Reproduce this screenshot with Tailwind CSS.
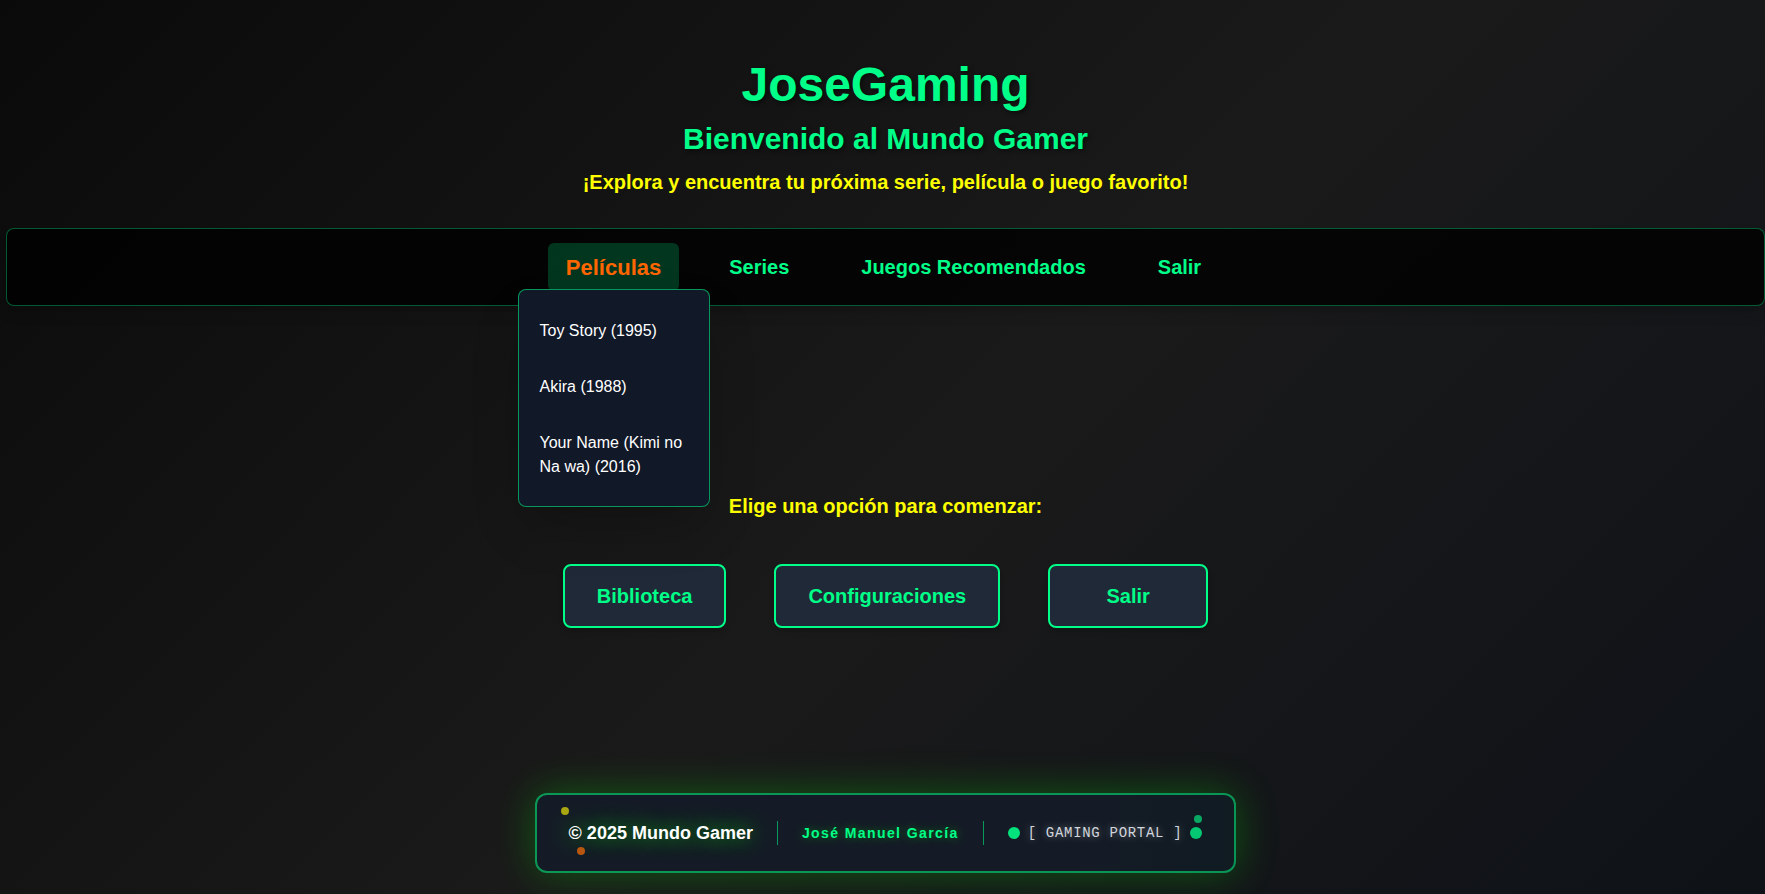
<!DOCTYPE html>
<html lang="es">
<head>
<meta charset="utf-8">
<title>JoseGaming</title>
<script src="https://cdn.jsdelivr.net/npm/@tailwindcss/browser@4"></script>
</head>
<body class="flex min-h-screen flex-col bg-[linear-gradient(135deg,#0a0a0a_0%,#1a1a1a_53%,#0d1117_106%)] pt-[61px] pb-[21px] pl-1.5 font-['Liberation_Sans',Arial,sans-serif] text-white">
  <header class="flex flex-col items-center text-center font-bold">
    <h1 class="mb-3 text-5xl leading-none text-[#00ff88] [text-shadow:2px_2px_4px_rgba(0,0,0,0.5)]">JoseGaming</h1>
    <h2 class="mb-[11px] text-3xl text-[#00ff88] [text-shadow:2px_2px_4px_rgba(0,0,0,0.5)]">Bienvenido al Mundo Gamer</h2>
    <p class="text-xl text-[#ffff00]">¡Explora y encuentra tu próxima serie, película o juego favorito!</p>
  </header>

  <nav class="mt-8 rounded-lg border border-[#00ff88]/35 bg-black/80 p-4 shadow-lg">
    <ul class="flex justify-center gap-10 text-xl font-bold text-[#00ff88]">
      <li class="relative flex h-11 items-center">
        <a href="#peliculas" class="-mx-1.5 flex h-12 shrink-0 items-center rounded-md bg-[#00ff88]/20 px-[18px] pt-0.5 text-[22px] text-[#ff6600]">Películas</a>
        <ul class="absolute top-full left-1/2 z-10 w-48 -translate-x-1/2 rounded-lg border border-[#00ff88]/55 bg-[#111827] pt-[13px] pb-[11px] text-base font-normal text-white shadow-2xl">
          <li><a href="#toy-story" class="block px-[21px] py-4">Toy Story (1995)</a></li>
          <li><a href="#akira" class="block px-[21px] py-4">Akira (1988)</a></li>
          <li><a href="#your-name" class="block px-[21px] py-4">Your Name (Kimi no Na wa) (2016)</a></li>
        </ul>
      </li>
      <li><a href="#series" class="block px-4 py-2">Series</a></li>
      <li><a href="#juegos" class="block px-4 py-2">Juegos Recomendados</a></li>
      <li><a href="#salir" class="block px-4 py-2">Salir</a></li>
    </ul>
  </nav>

  <main class="flex grow flex-col items-center justify-center gap-11 pt-[21px]">
    <p class="text-xl font-bold text-[#ffff00]">Elige una opción para comenzar:</p>
    <div class="flex gap-12 text-xl font-bold text-[#00ff88]">
      <button type="button" class="min-w-40 rounded-lg border-2 border-[#00ff88] bg-[#1f2937] px-8 py-4 shadow-md">Biblioteca</button>
      <button type="button" class="min-w-40 rounded-lg border-2 border-[#00ff88] bg-[#1f2937] px-8 py-4 shadow-md">Configuraciones</button>
      <button type="button" class="min-w-40 rounded-lg border-2 border-[#00ff88] bg-[#1f2937] px-8 py-4 shadow-md">Salir</button>
    </div>
  </main>

  <footer class="flex justify-center">
    <div class="relative flex h-20 items-center gap-6 rounded-xl border-2 border-[#00ff88]/55 bg-[linear-gradient(90deg,#151b26,#141b26_80%,#101b22)] bg-clip-padding px-8 shadow-[0_0_40px_rgba(0,255,0,0.28)]">
      <span class="absolute top-3 left-6 size-2 rounded-full bg-[#aaa612]"></span>
      <span class="absolute bottom-4 left-10 size-2 rounded-full bg-[#b7560f]"></span>
      <span class="absolute top-5 right-8 size-2 rounded-full bg-[#08a863]"></span>
      <span class="text-lg font-bold [text-shadow:0_0_20px_rgba(0,255,0,0.7)]">© 2025 Mundo Gamer</span>
      <span class="h-6 w-px bg-[#00ff88]/55"></span>
      <span class="text-sm font-bold tracking-widest text-[#00ff88] [text-shadow:0_0_8px_rgba(0,255,0,0.4)]">José Manuel García</span>
      <span class="h-6 w-px bg-[#00ff88]/55"></span>
      <div class="flex items-center gap-2">
        <span class="size-3 rounded-full bg-[#03e27c]"></span>
        <span class="font-['Liberation_Mono',monospace] text-sm tracking-wider text-gray-300 [text-shadow:0_0_8px_rgba(255,255,255,0.4)]">[ GAMING PORTAL ]</span>
        <span class="size-3 rounded-full bg-[#05c872]"></span>
      </div>
    </div>
  </footer>
</body>
</html>
